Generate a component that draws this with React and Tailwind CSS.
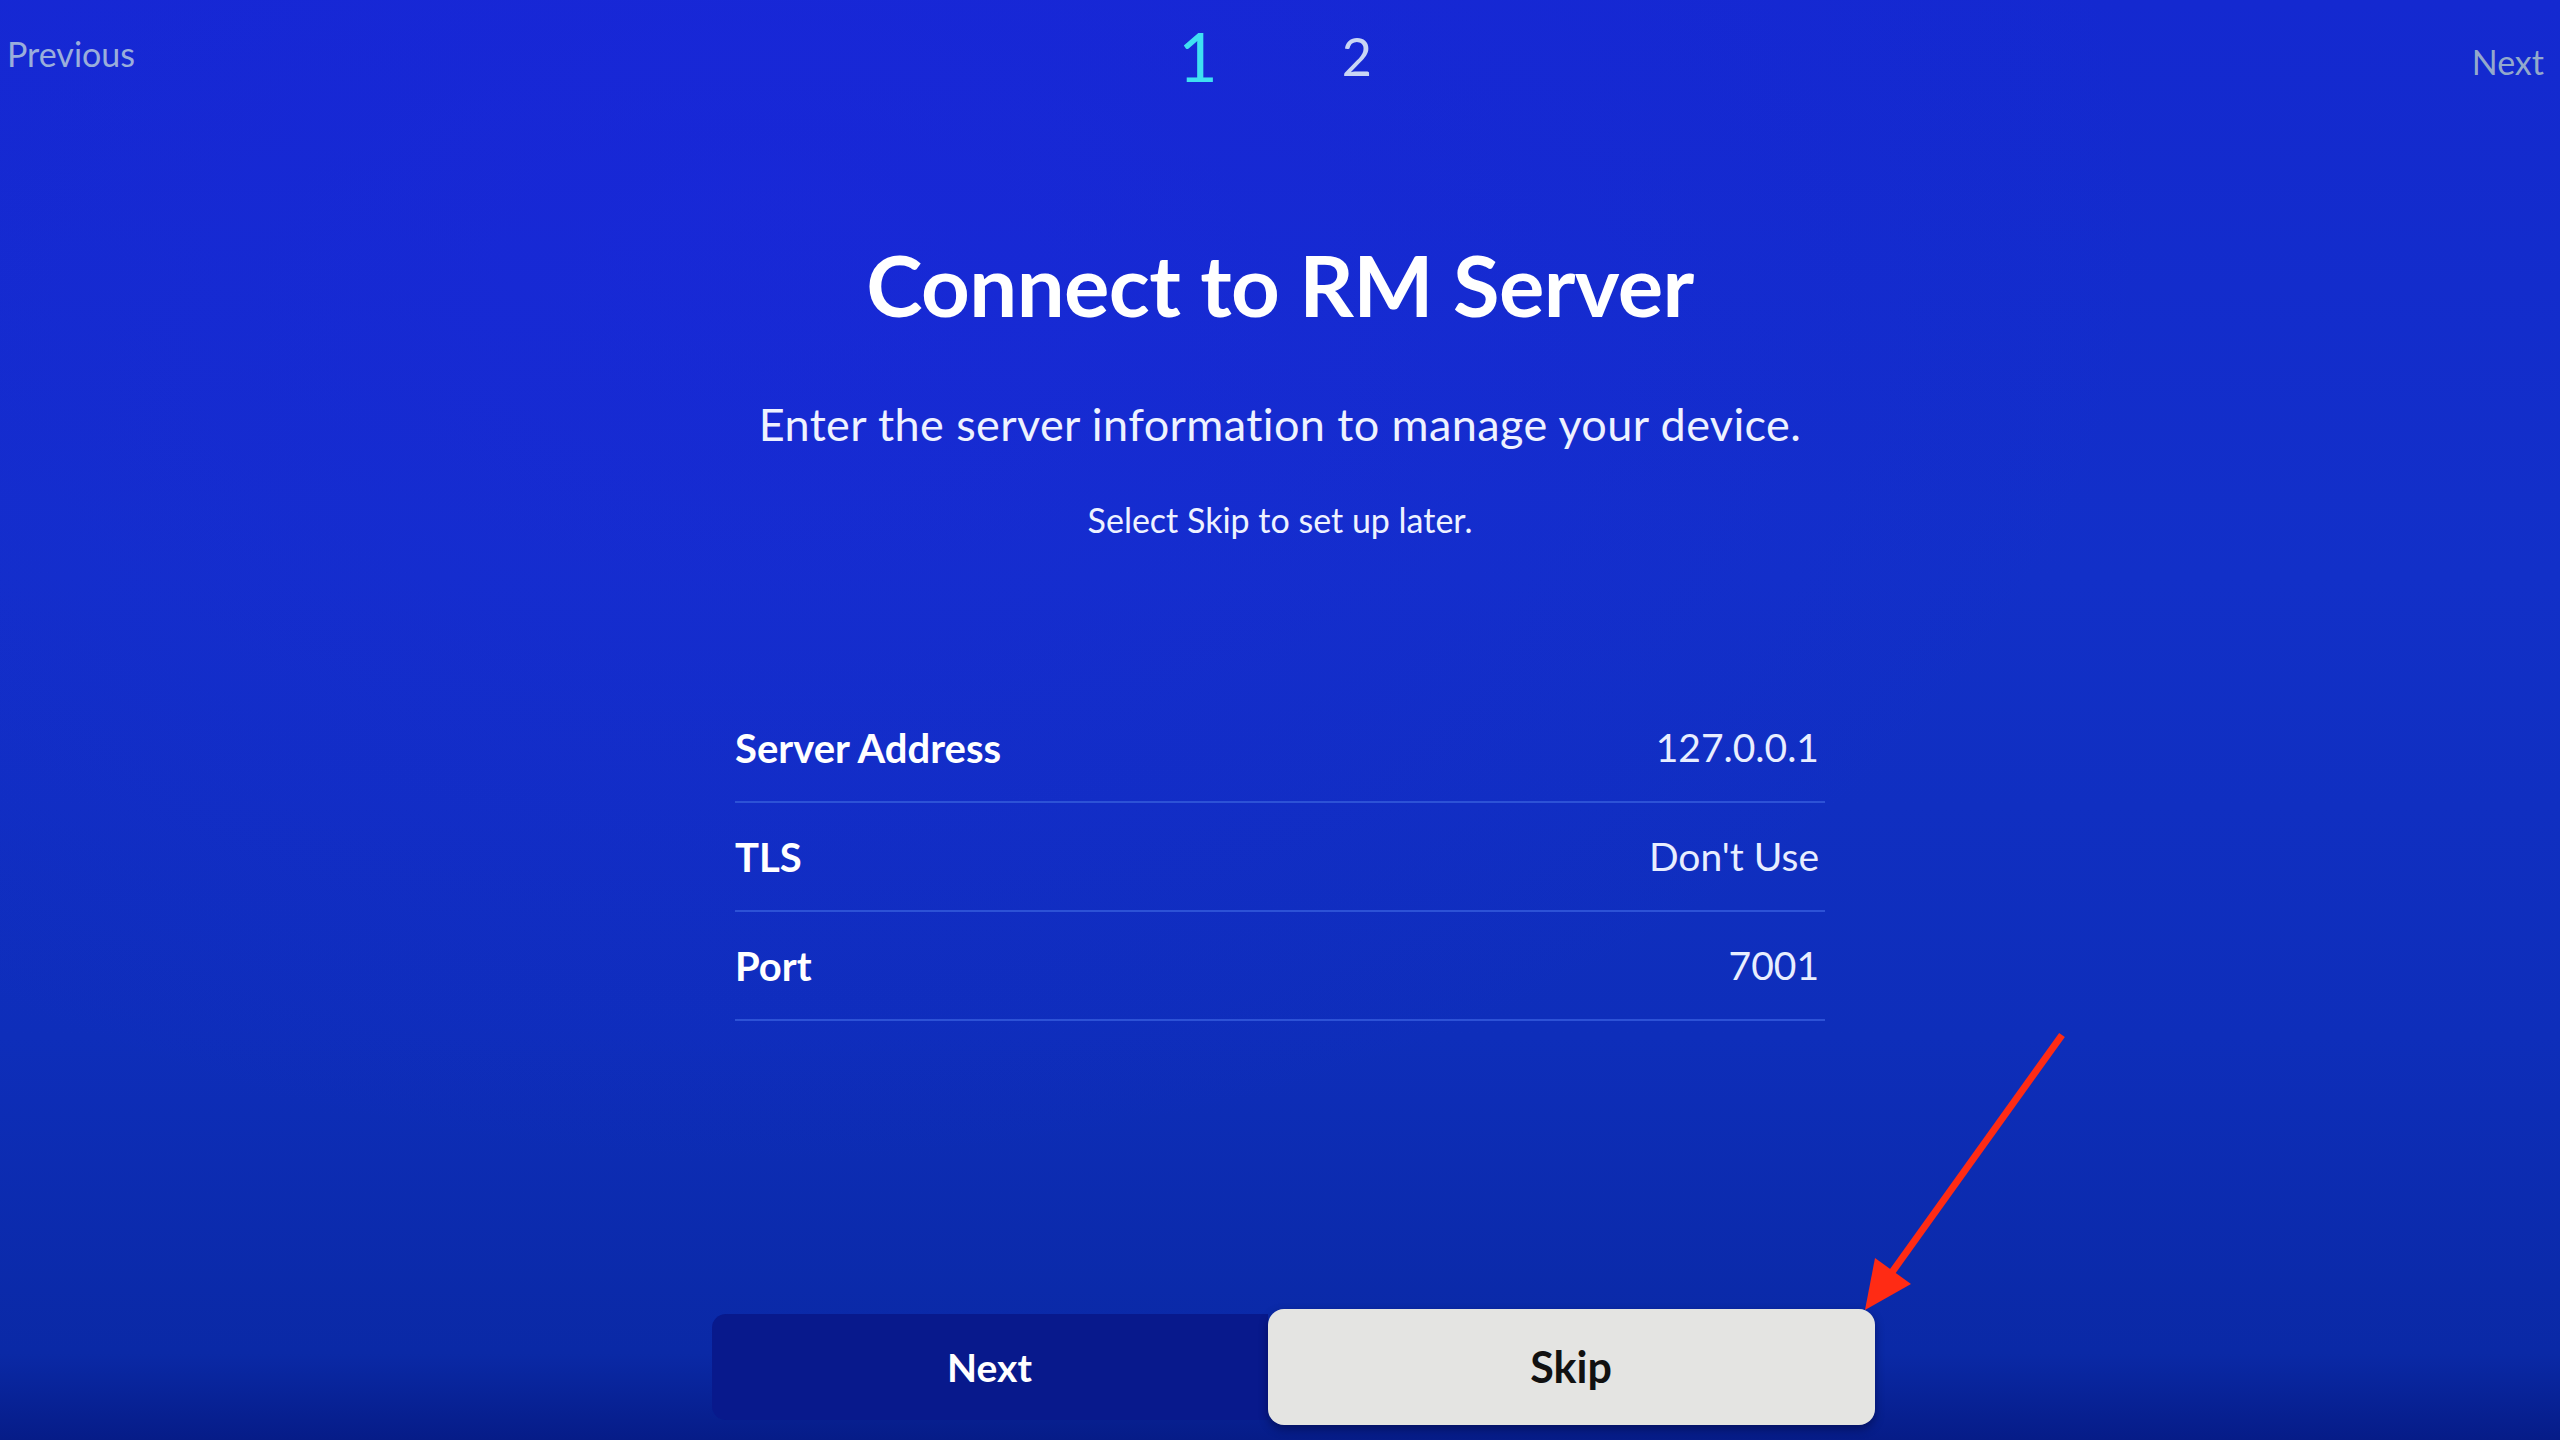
import React from "react";

const rows = [
  { label: "Server Address", value: "127.0.0.1" },
  { label: "TLS", value: "Don't Use" },
  { label: "Port", value: "7001" },
];

const Arrow = () => (
  <svg
    className="absolute left-[1850px] top-[1025px]"
    width="230"
    height="300"
    viewBox="0 0 230 300"
  >
    <line x1="212" y1="10" x2="40" y2="250" stroke="#ff2b14" strokeWidth="7" strokeLinecap="butt" />
    <polygon points="15,285 25,233 61,259" fill="#ff2b14" />
  </svg>
);

export default function App() {
  return (
    <div className="relative w-[2560px] h-[1440px] overflow-hidden font-['Lato','Open_Sans',sans-serif] text-white bg-[radial-gradient(ellipse_at_30%_15%,rgba(30,36,226,0.45)_0%,transparent_55%),linear-gradient(180deg,#1429d0_0%,#1230c8_40%,#0e2eba_72%,#0a29a6_94%,#061c88_100%)]">
      {/* top navigation */}
      <div className="grid grid-cols-[1fr_auto_1fr] h-[110px]">
        <div className="pt-[37px] pl-[7px] text-[34px] leading-none text-[#9aaedb]">Previous</div>
        <div className="mr-[10px] flex items-start gap-[124px] pt-[22px]">
          <span className="text-[68px] leading-none text-[#3fe0f2]">1</span>
          <span className="pt-[8px] text-[52px] leading-none text-[#c9d6f4]">2</span>
        </div>
        <div className="flex justify-end pt-[45px] pr-[16px] text-[34px] leading-none text-[#93a9cc]">Next</div>
      </div>

      <div className="flex flex-col items-center">
        <h1 className="mt-[132px] text-[85px] leading-none font-bold tracking-[-0.6px]">Connect to RM Server</h1>
        <p className="mt-[75px] text-[45px] leading-none tracking-[0.4px] text-[#eef2ff]">
          Enter the server information to manage your device.
        </p>
        <p className="mt-[56px] text-[34px] leading-none text-[#eef2ff]">Select Skip to set up later.</p>

        <div className="mt-[157px] w-[1090px]">
          {rows.map((row) => (
            <div
              key={row.label}
              className="flex items-center justify-between h-[109px] border-b-2 border-[#2d52d6]"
            >
              <span className="text-[40px] font-bold leading-none">{row.label}</span>
              <span className="pr-[6px] text-[39px] leading-none text-[#e8eeff]">{row.value}</span>
            </div>
          ))}
        </div>

        <div className="mt-[288px] ml-[26px] flex items-center">
          <button className="w-[556px] h-[106px] rounded-l-[14px] bg-[#08198c] text-[39px] font-bold text-white">
            Next
          </button>
          <button className="w-[607px] h-[116px] rounded-[16px] bg-[#e4e4e2] text-[43px] font-bold text-[#111] shadow-[0_4px_10px_rgba(0,0,40,0.45)]">
            Skip
          </button>
        </div>
      </div>

      <Arrow />
    </div>
  );
}
